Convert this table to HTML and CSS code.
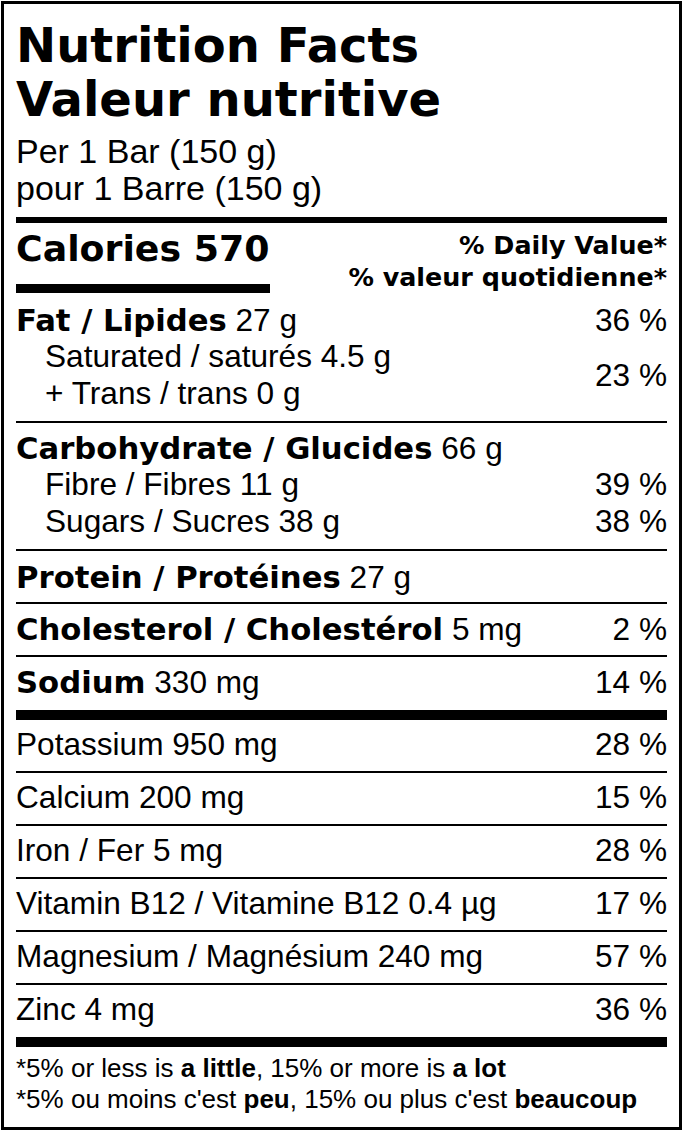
FILE: index.html
```html
<!DOCTYPE html>
<html>
<head>
<meta charset="utf-8">
<link rel="stylesheet" href="styles.css">
</head>
<body>
<div class="label">
  <div class="title">Nutrition Facts<br>Valeur nutritive</div>
  <div class="serving">Per 1 Bar (150 g)<br>pour 1 Barre (150 g)</div>
  <div class="bar bar-top"></div>
  <div class="cal">
    <div class="cal-left">
      <div class="cal-text">Calories 570</div>
      <div class="cal-bar"></div>
    </div>
    <div class="dv">% Daily Value*<br>% valeur quotidienne*</div>
  </div>

  <div class="sec sec-fat">
    <div class="row"><span><b>Fat / Lipides</b> 27 g</span><span>36 %</span></div>
    <div class="sub-group">
      <div class="sub-lines">
        <div class="line37">Saturated / saturés 4.5 g</div>
        <div class="line37">+ Trans / trans 0 g</div>
      </div>
      <span>23 %</span>
    </div>
  </div>

  <div class="sec sec-carb">
    <div class="row"><span><b>Carbohydrate / Glucides</b> 66 g</span></div>
    <div class="row sub"><span>Fibre / Fibres 11 g</span><span>39 %</span></div>
    <div class="row sub"><span>Sugars / Sucres 38 g</span><span>38 %</span></div>
  </div>

  <div class="sec sec-prot">
    <div class="row"><span><b>Protein / Protéines</b> 27 g</span></div>
  </div>

  <div class="sec sec-std">
    <div class="row"><span><b>Cholesterol / Cholestérol</b> 5 mg</span><span>2 %</span></div>
  </div>

  <div class="sec sec-sod">
    <div class="row"><span><b>Sodium</b> 330 mg</span><span>14 %</span></div>
  </div>

  <div class="bar bar-thick"></div>

  <div class="sec sec-min">
    <div class="row"><span>Potassium 950 mg</span><span>28 %</span></div>
  </div>
  <div class="sec sec-min">
    <div class="row"><span>Calcium 200 mg</span><span>15 %</span></div>
  </div>
  <div class="sec sec-min">
    <div class="row"><span>Iron / Fer 5 mg</span><span>28 %</span></div>
  </div>
  <div class="sec sec-min">
    <div class="row"><span>Vitamin B12 / Vitamine B12 0.4 µg</span><span>17 %</span></div>
  </div>
  <div class="sec sec-min">
    <div class="row"><span>Magnesium / Magnésium 240 mg</span><span>57 %</span></div>
  </div>
  <div class="sec sec-min sec-last">
    <div class="row"><span>Zinc 4 mg</span><span>36 %</span></div>
  </div>

  <div class="bar bar-thick"></div>

  <div class="foot">
    <div class="foot-line">*5% or less is <strong>a little</strong>, 15% or more is <strong>a lot</strong></div>
    <div class="foot-line">*5% ou moins c'est <strong>peu</strong>, 15% ou plus c'est <strong>beaucoup</strong></div>
  </div>
</div>
</body>
</html>
```

FILE: styles.css
```css
html, body {
  margin: 0;
  padding: 0;
  background: #fff;
}

body {
  font-family: "Liberation Sans", Arial, sans-serif;
  color: #000;
}

.label {
  box-sizing: border-box;
  width: 681px;
  height: 1129px;
  margin: 1px 0 0 1px;
  border: 3px solid #000;
  padding: 0 12px;
  overflow: hidden;
}

.title {
  font-family: "DejaVu Sans", sans-serif;
  font-weight: bold;
  font-size: 48px;
  line-height: 54px;
  height: 108px;
  padding-top: 14px;
}

.serving {
  font-size: 34px;
  line-height: 37px;
  height: 74px;
  margin-top: 7px;
}

.bar {
  background: #000;
}

.bar-top {
  height: 6px;
  margin-top: 10px;
}

.bar-thick {
  height: 10px;
}

.cal {
  display: flex;
  justify-content: space-between;
  height: 64px;
  padding-top: 6px;
}

.cal-text {
  font-family: "DejaVu Sans", sans-serif;
  font-weight: bold;
  font-size: 36.3px;
  line-height: 40px;
  height: 40px;
}

.cal-bar {
  width: 254px;
  height: 9px;
  background: #000;
  margin-top: 15px;
}

.dv {
  font-family: "DejaVu Sans", sans-serif;
  font-weight: bold;
  font-size: 25.4px;
  line-height: 32px;
  text-align: right;
}

.sec {
  border-bottom: 2px solid #000;
  font-size: 31.6px;
  line-height: 36px;
}

.row {
  display: flex;
  justify-content: space-between;
  align-items: baseline;
  height: 36px;
}

.row b {
  font-family: "DejaVu Sans", sans-serif;
  font-weight: bold;
  font-size: 30.7px;
}

.sub {
  padding-left: 29px;
  line-height: 37px;
  height: 37px;
}

.sub-group {
  display: flex;
  justify-content: space-between;
  align-items: center;
  padding-left: 29px;
  line-height: 37px;
  height: 74px;
}

.line37 {
  height: 37px;
}

.sec-fat {
  padding: 9px 0 9px;
}

.sec-carb {
  padding: 7px 0 9px;
}

.sec-prot {
  padding: 8px 0 7px;
}

.sec-std {
  padding: 7px 0 8px;
}

.sec-sod {
  border-bottom: none;
  padding: 7px 0 10px;
}

.sec-min {
  padding: 6px 0 9px;
}

.sec-last {
  border-bottom: none;
  padding-bottom: 10px;
}

.foot {
  font-size: 26px;
  line-height: 31px;
  padding-top: 6px;
}

.foot-line {
  height: 31px;
}

.foot strong {
  font-weight: bold;
}
```
